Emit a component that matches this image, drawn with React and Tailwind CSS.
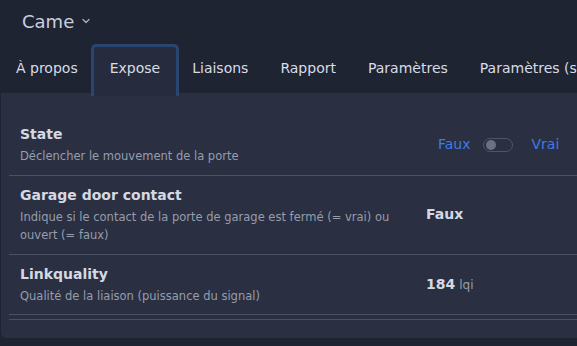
import { ChevronDown } from 'lucide-react'

const tabs = ['À propos', 'Expose', 'Liaisons', 'Rapport', 'Paramètres', 'Paramètres (spécifiques)']

const Row = ({ title, desc, children, first, last }) => (
  <div
    className={`flex border-b border-[#4a5163] pl-[11px] ${first ? 'pt-[11px]' : 'pt-[9px]'} ${
      last ? 'pb-[9px]' : 'pb-[10px]'
    }`}
  >
    <div className="w-[406px] shrink-0 pr-4">
      <div className="text-[14px] leading-[20px] font-semibold text-[#d5d9e2]">{title}</div>
      <div className="mt-[3px] text-[11.5px] leading-[18px] text-[#969dac]">{desc}</div>
    </div>
    <div className="flex flex-1 items-center">{children}</div>
  </div>
)

export default function App() {
  return (
    <div
      className="h-[346px] w-[577px] overflow-hidden bg-[#1f2433] text-[#d5d9e2]"
      style={{ fontFamily: '"DejaVu Sans", "Noto Sans", sans-serif' }}
    >
      {/* Header */}
      <div className="flex items-center gap-1.5 pl-[22px] pt-[6px] h-[36px]">
        <span className="text-[18px] text-[#c9cfdc]">Came</span>
        <ChevronDown className="h-3 w-3 text-[#a9b0bf]" strokeWidth={2.5} />
      </div>

      {/* Tabs */}
      <div className="relative z-10 mt-[8px] flex h-[49px] items-start whitespace-nowrap">
        {tabs.map((t, i) => (
          <div
            key={t}
            className={`flex items-center px-4 text-[14px] text-[#d8dce6] ${
              i === 1
                ? 'mx-[-3px] h-[52px] rounded-t-[5px] border-[3px] border-b-0 border-[#2b4571] bg-[#262c3d] pb-[6px]'
                : 'h-[49px]'
            }`}
          >
            {t}
          </div>
        ))}
      </div>

      {/* Panel */}
      <div className="ml-px h-[245px] rounded-bl-[5px] bg-[#2a3042] pt-[20px] pl-2">
        <Row first title="State" desc="Déclencher le mouvement de la porte">
          <div className="flex items-center pl-3 text-[14px] text-[#3d7be6]">
            <span>Faux</span>
            <span className="ml-3 flex h-[14px] w-[30px] items-center rounded-full border border-[#4e5567] px-[2px]">
              <span className="h-[10px] w-[10px] rounded-full bg-[#6b7180]" />
            </span>
            <span className="ml-[19px]">Vrai</span>
          </div>
        </Row>
        <Row
          title="Garage door contact"
          desc="Indique si le contact de la porte de garage est fermé (= vrai) ou ouvert (= faux)"
        >
          <span className="text-[14px] font-semibold text-[#d5d9e2]">Faux</span>
        </Row>
        <Row last title="Linkquality" desc="Qualité de la liaison (puissance du signal)">
          <span className="text-[14px] font-semibold text-[#d5d9e2]">184</span>
          <span className="ml-1 text-[12px] text-[#969dac]">lqi</span>
        </Row>
        <div className="mt-[4px] border-t border-[#4a5163]" />
      </div>
    </div>
  )
}
